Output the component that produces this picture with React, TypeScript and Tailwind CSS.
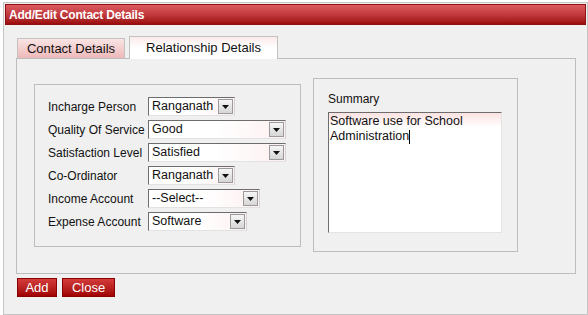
import React from "react"

const rows = [
  { label: "Incharge Person", value: "Ranganath", w: "w-[87px]" },
  { label: "Quality Of Service", value: "Good", w: "w-[138px]" },
  { label: "Satisfaction Level", value: "Satisfied", w: "w-[138px]" },
  { label: "Co-Ordinator", value: "Ranganath", w: "w-[87px]" },
  { label: "Income Account", value: "--Select--", w: "w-[112px]" },
  { label: "Expense Account", value: "Software", w: "w-[99px]" },
]

function Select({ value, w }: { value: string; w: string }) {
  return (
    <div
      className={`${w} h-[19px] flex items-center border border-t-[#6d6d6d] border-l-[#6d6d6d] border-r-[#d4d4d4] border-b-[#e2e2e2] bg-gradient-to-r from-white via-white to-[#fdf0f0]`}
    >
      <span className="flex-1 pl-[3px] text-[12.5px] leading-none text-[#111] whitespace-nowrap overflow-hidden">{value}</span>
      <div className="w-[15px] h-[15px] mr-px shrink-0 flex items-center justify-center border border-[#9a9a9a] bg-gradient-to-b from-[#f6f6f6] to-[#d6d6d6]">
        <svg width="7" height="4" viewBox="0 0 7 4">
          <path d="M0 0h7L3.5 4z" fill="#111" />
        </svg>
      </div>
    </div>
  )
}

export default function App() {
  return (
    <div className="w-[588px] h-[315px] bg-white pt-[2px] pl-[3px] font-['Liberation_Sans',Arial,sans-serif]">
      <div className="w-[585px] h-[313px] border border-[#c4c4c4] bg-[#f0f0f0] p-px">
        <div className="h-[21px] flex items-center pl-[3px] bg-gradient-to-b from-[#dc5a5e] via-[#c23a3e] to-[#9c0a0a] border border-[#8e1010]">
          <span className="text-white font-bold text-[12px] tracking-[-0.2px]">Add/Edit Contact Details</span>
        </div>

        <div className="ml-[11px] mt-[10px] w-[560px]">
          <div className="flex items-end h-[23px] pl-px gap-[4px]">
            <div className="w-[108px] h-[20px] flex items-center justify-center border border-b-0 border-[#c2c2c2] bg-gradient-to-b from-[#f9e4e4] to-[#eeb9b9] text-[13px] text-[#111]">
              Contact Details
            </div>
            <div className="w-[149px] h-[23px] -mb-px relative flex items-center justify-center border border-b-0 border-[#c2c2c2] bg-gradient-to-b from-[#fbeaea] via-white to-white text-[13px] text-[#111]">
              Relationship Details
            </div>
          </div>

          <div className="h-[216px] border border-[#bdbdbd] flex items-start gap-[12px] pl-[17px]">
            <div className="mt-[25px] w-[267px] h-[163px] border border-[#bdbdbd] pt-[12px] pl-[13px] flex flex-col gap-[4px]">
              {rows.map((r) => (
                <div key={r.label} className="flex items-center">
                  <span className="w-[100px] text-[12px] text-[#111] whitespace-nowrap">{r.label}</span>
                  <Select value={r.value} w={r.w} />
                </div>
              ))}
            </div>

            <div className="mt-[19px] w-[205px] h-[174px] border border-[#bdbdbd] pt-[13px] pl-[14px]">
              <div className="text-[12px] text-[#111] leading-[15px]">Summary</div>
              <div className="mt-[5px] w-[174px] h-[121px] border border-t-[#6d6d6d] border-l-[#6d6d6d] border-r-[#e4e4e4] border-b-[#e4e4e4] bg-[linear-gradient(to_bottom,#fbe2e2,#ffffff_14px)] px-[1px] pt-[1px] text-[12.5px] leading-[15px] text-[#111]">
                Software use for School
                <br />
                Administration<span className="inline-block w-px h-[14px] bg-black align-middle" />
              </div>
            </div>
          </div>

          <div className="mt-[4px] ml-[1px] flex gap-[5px]">
            <button className="w-[40px] h-[19px] flex items-center justify-center border border-[#8a0000] bg-gradient-to-b from-[#d43a3a] to-[#a00000] text-white text-[13px]">
              Add
            </button>
            <button className="w-[53px] h-[19px] flex items-center justify-center border border-[#8a0000] bg-gradient-to-b from-[#d43a3a] to-[#a00000] text-white text-[13px]">
              Close
            </button>
          </div>
        </div>
      </div>
    </div>
  )
}
